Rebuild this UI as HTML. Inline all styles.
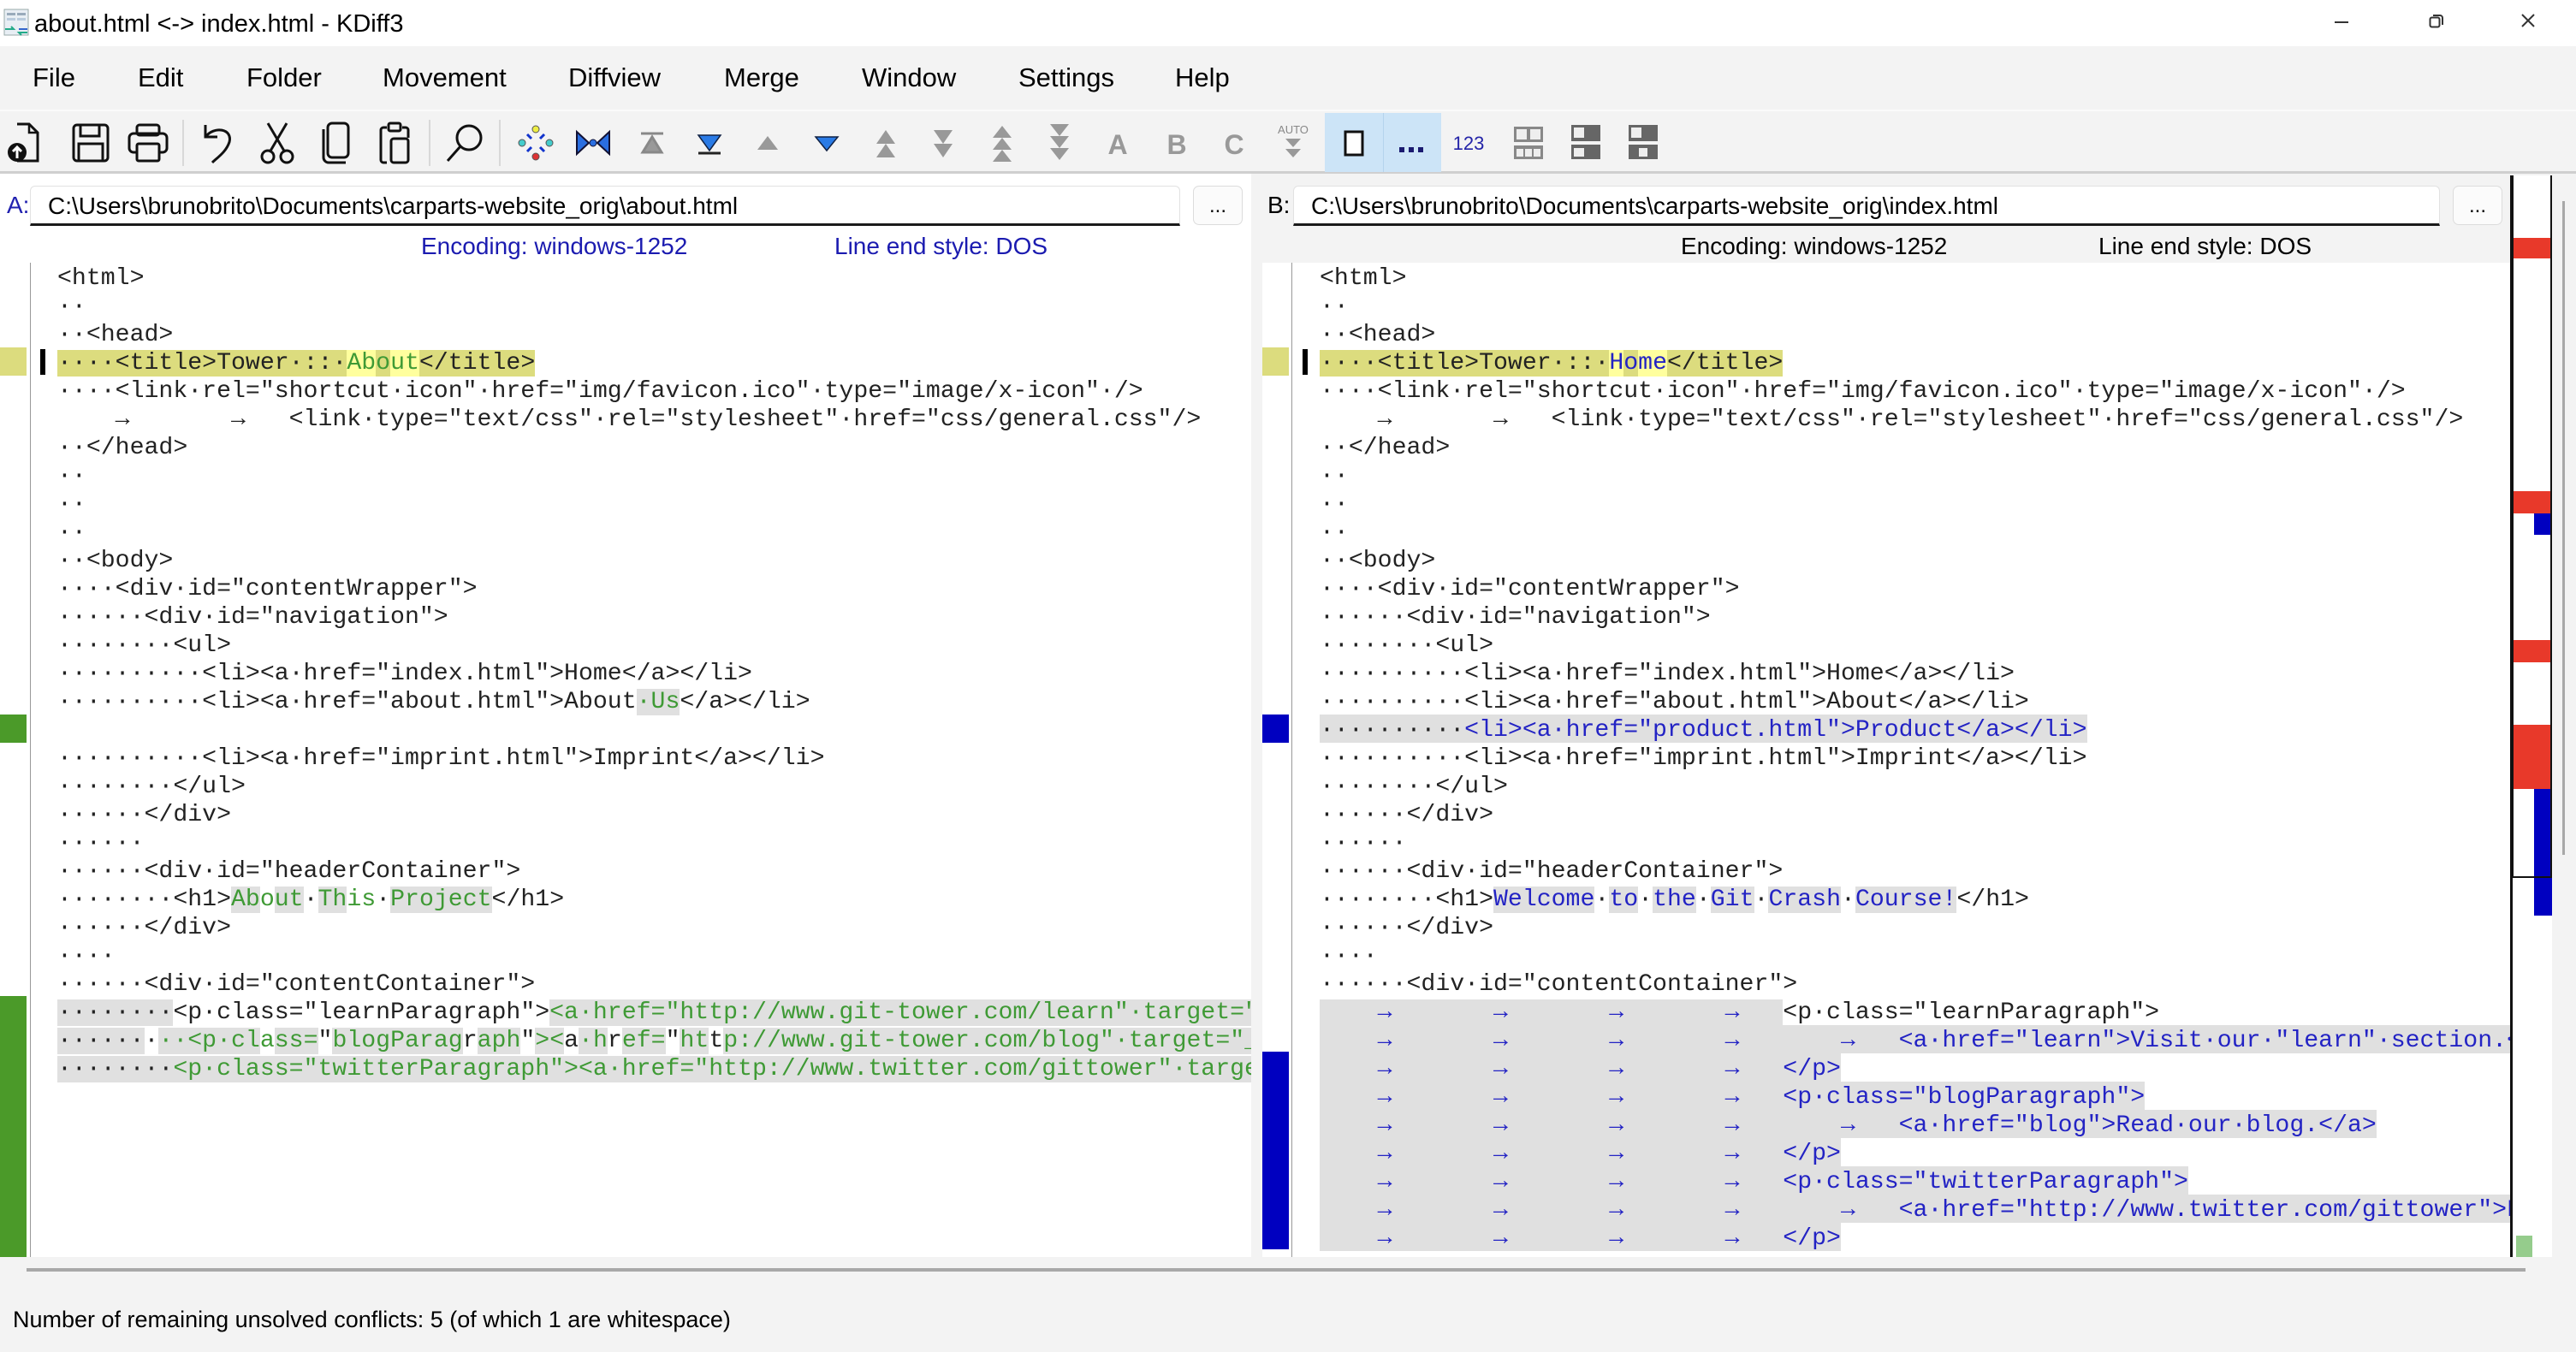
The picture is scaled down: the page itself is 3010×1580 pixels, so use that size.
<!DOCTYPE html>
<html><head><meta charset="utf-8">
<style>
*{margin:0;padding:0;box-sizing:border-box}
body{width:3010px;height:1580px;background:#f3f3f3;position:relative;overflow:hidden;font-family:"Liberation Sans",sans-serif;color:#000}
.abs{position:absolute}
#title{left:0;top:0;width:3010px;height:54px;background:#fff}
#title .t{left:40px;top:12px;font-size:29px;white-space:nowrap}
.menu{top:73px;font-size:31px;white-space:nowrap}
.ic{position:absolute;top:142px;width:50px;height:50px}
.sep{position:absolute;top:140px;width:2px;height:54px;background:#d8d8d8}
.path{position:absolute;top:217px;height:47px;background:#fff;border:1px solid #e2e2e2;border-bottom:3px solid #1a1a1a;border-radius:6px 6px 0 0;font-size:28px;line-height:46px;padding-left:20px;white-space:nowrap;overflow:hidden}
.btn{position:absolute;top:217px;width:58px;height:46px;background:#fbfbfb;border:1px solid #dcdcdc;border-radius:7px;font-size:24px;text-align:center;line-height:46px}
.enc{position:absolute;top:272px;font-size:28px;white-space:nowrap}
.pane{position:absolute;top:307px;height:1162px;background:#fff;overflow:hidden}
.ln{position:absolute;left:67px;height:33px;line-height:33px;padding-top:2px;font-family:"Liberation Mono","DejaVu Sans Mono",monospace;font-size:28.2px;white-space:pre;color:#222}
.g{background:#e0e0e0}
.y{background:#dcdc7e}
.yl{background:#ffff9e}
.gt{color:#3f9a35}
.bt{color:#2323c4}
.w{background:#fff}
.mk{position:absolute;left:0;width:31px}
</style></head><body>
<div id="title" class="abs">
<svg class="abs" style="left:4px;top:10px" width="32" height="34"><rect x="1" y="1" width="28" height="30" fill="#e8eef4" stroke="#9aa"/><rect x="4" y="5" width="10" height="3" fill="#9ab"/><rect x="16" y="5" width="10" height="3" fill="#9ab"/><rect x="4" y="11" width="10" height="3" fill="#bcd"/><rect x="16" y="11" width="10" height="3" fill="#bcd"/><path d="M2 24h10l-3-3M28 28H18l3 3" stroke="#2a8" stroke-width="2" fill="none"/><path d="M18 24h10" stroke="#36c" stroke-width="2"/></svg>
<div class="abs t">about.html &lt;-&gt; index.html - KDiff3</div>
<div class="abs" style="left:2728px;top:25px;width:16px;height:2px;background:#333"></div>
<svg class="abs" style="left:2838px;top:16px" width="18" height="18"><rect x="1.5" y="4.5" width="11" height="11" rx="2" fill="none" stroke="#333" stroke-width="2"/><path d="M5 2h8a3 3 0 0 1 3 3v8" fill="none" stroke="#333" stroke-width="2"/></svg>
<svg class="abs" style="left:2945px;top:15px" width="18" height="18"><path d="M2 2l14 14M16 2L2 16" stroke="#333" stroke-width="2"/></svg>
</div>
<div class="abs menu" style="left:38px">File</div>
<div class="abs menu" style="left:161px">Edit</div>
<div class="abs menu" style="left:288px">Folder</div>
<div class="abs menu" style="left:447px">Movement</div>
<div class="abs menu" style="left:664px">Diffview</div>
<div class="abs menu" style="left:846px">Merge</div>
<div class="abs menu" style="left:1007px">Window</div>
<div class="abs menu" style="left:1190px">Settings</div>
<div class="abs menu" style="left:1373px">Help</div>
<div class="abs" style="left:0;top:128px;width:3010px;height:2px;background:#fafafa"></div>
<div class="abs" style="left:0;top:200px;width:3010px;height:3px;background:#cfcfcf"></div>

<!-- toolbar -->
<svg class="ic" style="left:6px" viewBox="0 0 50 50"><path d="M14 3h14l10 10v33H14" fill="none" stroke="#111" stroke-width="3"/><path d="M28 3v10h10" fill="none" stroke="#111" stroke-width="2.5"/><circle cx="14" cy="36" r="11" fill="#111"/><path d="M14 43V30M9 35l5-5 5 5" stroke="#fff" stroke-width="3" fill="none"/></svg>
<svg class="ic" style="left:81px" viewBox="0 0 50 50"><rect x="5" y="4" width="40" height="42" rx="4" fill="none" stroke="#111" stroke-width="3"/><rect x="13" y="4" width="22" height="13" fill="none" stroke="#111" stroke-width="3"/><rect x="11" y="26" width="28" height="20" fill="none" stroke="#111" stroke-width="3"/></svg>
<svg class="ic" style="left:148px" viewBox="0 0 50 50"><rect x="12" y="4" width="26" height="12" rx="3" fill="none" stroke="#111" stroke-width="3"/><rect x="3" y="14" width="44" height="22" rx="5" fill="none" stroke="#111" stroke-width="3"/><rect x="12" y="26" width="26" height="20" rx="2" fill="#f3f3f3" stroke="#111" stroke-width="3"/></svg>
<div class="sep" style="left:213px"></div>
<svg class="ic" style="left:230px" viewBox="0 0 50 50"><path d="M10 4v14h14" fill="none" stroke="#111" stroke-width="3"/><path d="M10 18C20 5 42 8 38 24 34 36 24 42 18 48" fill="none" stroke="#111" stroke-width="3"/></svg>
<svg class="ic" style="left:299px" viewBox="0 0 50 50"><path d="M14 2l20 34M36 2L16 36" stroke="#111" stroke-width="3"/><circle cx="14" cy="41" r="7" fill="none" stroke="#111" stroke-width="3"/><circle cx="36" cy="41" r="7" fill="none" stroke="#111" stroke-width="3"/></svg>
<svg class="ic" style="left:369px" viewBox="0 0 50 50"><rect x="14" y="2" width="24" height="40" rx="5" fill="none" stroke="#111" stroke-width="3"/><path d="M9 9v33a6 6 0 0 0 6 6h20" fill="none" stroke="#111" stroke-width="3"/></svg>
<svg class="ic" style="left:436px" viewBox="0 0 50 50"><path d="M16 7h-4a3 3 0 0 0-3 3v35a3 3 0 0 0 3 3h4M34 7h4a3 3 0 0 1 3 3v9" fill="none" stroke="#111" stroke-width="3"/><rect x="18" y="2" width="14" height="9" rx="2" fill="none" stroke="#111" stroke-width="3"/><rect x="21" y="20" width="20" height="28" rx="3" fill="none" stroke="#111" stroke-width="3"/></svg>
<div class="sep" style="left:501px"></div>
<svg class="ic" style="left:518px" viewBox="0 0 50 50"><circle cx="30" cy="19" r="14" fill="none" stroke="#111" stroke-width="3"/><path d="M20 29L5 46" stroke="#111" stroke-width="3"/></svg>
<div class="sep" style="left:583px"></div>
<svg class="ic" style="left:601px" viewBox="0 0 50 50"><circle cx="25" cy="9" r="4" fill="#ee4" stroke="#555"/><circle cx="25" cy="41" r="4" fill="#d33" stroke="#555"/><circle cx="9" cy="25" r="4" fill="#4cc" stroke="#555"/><circle cx="41" cy="25" r="4" fill="#4cc" stroke="#555"/><path d="M15 15l5 5M35 15l-5 5M15 35l5-5M35 35l-5-5" stroke="#13c" stroke-width="3"/></svg>
<svg class="ic" style="left:668px" viewBox="0 0 50 50"><path d="M6 12v26l14-13zM44 12v26L30 25z" fill="#2a6ee0" stroke="#113" stroke-width="2"/><circle cx="25" cy="25" r="4" fill="#2a6ee0" stroke="#113"/></svg>
<svg class="ic" style="left:737px" viewBox="0 0 50 50"><path d="M12 14h26M14 36h22L25 18z" fill="#999" stroke="#888" stroke-width="3"/></svg>
<svg class="ic" style="left:804px" viewBox="0 0 50 50"><path d="M12 16h26L25 34z" fill="#2a7be6" stroke="#124" stroke-width="1.5"/><path d="M12 37h26" stroke="#222" stroke-width="3"/></svg>
<svg class="ic" style="left:872px" viewBox="0 0 50 50"><path d="M13 33h24L25 17z" fill="#999"/></svg>
<svg class="ic" style="left:941px" viewBox="0 0 50 50"><path d="M12 18h26L25 34z" fill="#2a7be6" stroke="#124" stroke-width="1.5"/></svg>
<svg class="ic" style="left:1010px" viewBox="0 0 50 50"><path d="M14 26h22L25 10zM14 42h22L25 26z" fill="#999"/></svg>
<svg class="ic" style="left:1077px" viewBox="0 0 50 50"><path d="M14 10h22L25 26zM14 26h22L25 42z" fill="#999"/></svg>
<svg class="ic" style="left:1146px" viewBox="0 0 50 50"><path d="M14 19h22L25 5zM14 33h22L25 19zM14 47h22L25 33z" fill="#999"/></svg>
<svg class="ic" style="left:1213px" viewBox="0 0 50 50"><path d="M14 3h22L25 17zM14 17h22L25 31zM14 31h22L25 45z" fill="#999"/></svg>
<svg class="ic" style="left:1281px" viewBox="0 0 50 50"><text x="25" y="38" text-anchor="middle" font-family="Liberation Sans" font-weight="bold" font-size="32" fill="#999">A</text></svg>
<svg class="ic" style="left:1350px" viewBox="0 0 50 50"><text x="25" y="38" text-anchor="middle" font-family="Liberation Sans" font-weight="bold" font-size="32" fill="#999">B</text></svg>
<svg class="ic" style="left:1417px" viewBox="0 0 50 50"><text x="25" y="38" text-anchor="middle" font-family="Liberation Sans" font-weight="bold" font-size="32" fill="#999">C</text></svg>
<svg class="ic" style="left:1486px" viewBox="0 0 50 50"><text x="25" y="14" text-anchor="middle" font-family="Liberation Sans" font-size="13" fill="#888">AUTO</text><path d="M16 20h18l-9 10zM16 32h18l-9 10z" fill="#999"/></svg>
<div class="abs" style="left:1548px;top:132px;width:136px;height:69px;background:#cce4f7"></div>
<div class="abs" style="left:1616px;top:132px;width:1px;height:69px;background:#b5d3ec"></div>
<svg class="ic" style="left:1557px" viewBox="0 0 50 50"><rect x="15" y="12" width="20" height="27" fill="#fff" stroke="#111" stroke-width="3"/></svg>
<svg class="ic" style="left:1624px" viewBox="0 0 50 50"><path d="M11 33h6M22 33h6M33 33h6" stroke="#1a1a70" stroke-width="6"/></svg>
<svg class="ic" style="left:1691px" viewBox="0 0 50 50"><text x="25" y="33" text-anchor="middle" font-family="Liberation Sans" font-size="22" fill="#2323a8">123</text></svg>
<svg class="ic" style="left:1761px" viewBox="0 0 50 50"><rect x="8" y="6" width="34" height="38" fill="#888"/><rect x="11" y="9" width="12" height="12" fill="#eee"/><rect x="27" y="9" width="12" height="12" fill="#eee"/><rect x="11" y="32" width="8" height="9" fill="#eee"/><rect x="21" y="32" width="8" height="9" fill="#eee"/><rect x="31" y="32" width="8" height="9" fill="#eee"/><rect x="8" y="24" width="34" height="4" fill="#f3f3f3"/></svg>
<svg class="ic" style="left:1828px" viewBox="0 0 50 50"><rect x="8" y="4" width="34" height="40" fill="#666"/><rect x="11" y="7" width="12" height="12" fill="#eee"/><rect x="8" y="23" width="34" height="4" fill="#f3f3f3"/><rect x="11" y="31" width="12" height="10" fill="#eee"/></svg>
<svg class="ic" style="left:1895px" viewBox="0 0 50 50"><rect x="8" y="4" width="34" height="40" fill="#666"/><rect x="11" y="7" width="12" height="12" fill="#eee"/><rect x="8" y="23" width="34" height="4" fill="#f3f3f3"/><rect x="20" y="31" width="10" height="10" fill="#eee"/></svg>

<!-- headers -->
<div class="abs" style="left:0;top:203px;width:1462px;height:104px;background:#fff"></div>
<div class="abs" style="left:8px;top:224px;font-size:28px;color:#2222b0">A:</div>
<div class="path" style="left:35px;width:1344px">C:\Users\brunobrito\Documents\carparts-website_orig\about.html</div>
<div class="btn" style="left:1394px">...</div>
<div class="abs" style="left:1481px;top:224px;font-size:28px">B:</div>
<div class="path" style="left:1511px;width:1340px">C:\Users\brunobrito\Documents\carparts-website_orig\index.html</div>
<div class="btn" style="left:2866px">...</div>
<div class="enc" style="left:492px;color:#1b1bb0">Encoding: windows-1252</div>
<div class="enc" style="left:975px;color:#1b1bb0">Line end style: DOS</div>
<div class="enc" style="left:1964px">Encoding: windows-1252</div>
<div class="enc" style="left:2452px">Line end style: DOS</div>

<!-- left pane -->
<div class="pane" style="left:0;width:1462px">
<div class="abs" style="left:35px;top:0;width:1px;height:1162px;background:#999"></div>
<div class="mk" style="top:99px;height:33px;background:#dcdc7e"></div>
<div class="abs" style="left:47px;top:101px;width:6px;height:30px;background:#000"></div>
<div class="mk" style="top:528px;height:33px;background:#4b9a29"></div>
<div class="mk" style="top:857px;height:305px;background:#4b9a29"></div>
<div class="ln" style="top:0">&lt;html&gt;</div>
<div class="ln" style="top:33px">··</div>
<div class="ln" style="top:66px">··&lt;head&gt;</div>
<div class="ln" style="top:99px"><span class="y">····&lt;title&gt;Tower·::·</span><span class="yl gt">Ab</span><span class="y gt">o</span><span class="yl gt">ut</span><span class="y">&lt;/title&gt;</span></div>
<div class="ln" style="top:132px">····&lt;link·rel="shortcut·icon"·href="img/favicon.ico"·type="image/x-icon"·/&gt;</div>
<div class="ln" style="top:165px">    →       →   &lt;link·type="text/css"·rel="stylesheet"·href="css/general.css"/&gt;</div>
<div class="ln" style="top:198px">··&lt;/head&gt;</div>
<div class="ln" style="top:231px">··</div>
<div class="ln" style="top:264px">··</div>
<div class="ln" style="top:297px">··</div>
<div class="ln" style="top:330px">··&lt;body&gt;</div>
<div class="ln" style="top:363px">····&lt;div·id="contentWrapper"&gt;</div>
<div class="ln" style="top:396px">······&lt;div·id="navigation"&gt;</div>
<div class="ln" style="top:429px">········&lt;ul&gt;</div>
<div class="ln" style="top:462px">··········&lt;li&gt;&lt;a·href="index.html"&gt;Home&lt;/a&gt;&lt;/li&gt;</div>
<div class="ln" style="top:495px">··········&lt;li&gt;&lt;a·href="about.html"&gt;About<span class="g gt">·Us</span>&lt;/a&gt;&lt;/li&gt;</div>
<div class="ln" style="top:561px">··········&lt;li&gt;&lt;a·href="imprint.html"&gt;Imprint&lt;/a&gt;&lt;/li&gt;</div>
<div class="ln" style="top:594px">········&lt;/ul&gt;</div>
<div class="ln" style="top:627px">······&lt;/div&gt;</div>
<div class="ln" style="top:660px">······</div>
<div class="ln" style="top:693px">······&lt;div·id="headerContainer"&gt;</div>
<div class="ln" style="top:726px">········&lt;h1&gt;<span class="g gt">Ab</span><span class="gt">o</span><span class="g gt">ut</span>·<span class="g gt">Th</span><span class="gt">is</span>·<span class="g gt">Project</span>&lt;/h1&gt;</div>
<div class="ln" style="top:759px">······&lt;/div&gt;</div>
<div class="ln" style="top:792px">····</div>
<div class="ln" style="top:825px">······&lt;div·id="contentContainer"&gt;</div>
<div class="ln" style="top:858px"><span class="g">········</span>&lt;p·class="learnParagraph"&gt;<span class="g gt">&lt;a·href="http://www.git-tower.com/learn"·target="_blank"&gt;Visit·our·learn·section&lt;/a&gt;&lt;/p&gt;</span></div>
<div class="ln" style="top:891px"><span class="g">······</span>·<span class="g gt">··&lt;p·cl</span><span class="gt">a</span><span class="g gt">ss=</span>"<span class="g gt">blogParag</span>r<span class="g gt">aph</span>"<span class="g gt">&gt;&lt;</span>a<span class="g gt">·h</span>r<span class="g gt">ef=</span>"<span class="g gt">ht</span>t<span class="g gt">p://www.git-tower.com/blog"·target="_blank"&gt;Read·our·blog&lt;/a&gt;&lt;/p&gt;</span></div>
<div class="ln" style="top:924px"><span class="g">········</span><span class="g gt">&lt;p·class="twitterParagraph"&gt;&lt;a·href="http://www.twitter.com/gittower"·target="_blank"&gt;Follow&lt;/a&gt;</span></div>
</div>

<!-- right pane -->
<div class="pane" style="left:1475px;width:1460px">
<div class="abs" style="left:34px;top:0;width:1px;height:1162px;background:#999"></div>
<div class="mk" style="top:99px;height:33px;background:#dcdc7e"></div>
<div class="abs" style="left:47px;top:101px;width:6px;height:30px;background:#000"></div>
<div class="mk" style="top:528px;height:33px;background:#0000c0"></div>
<div class="mk" style="top:922px;height:231px;background:#0000c0"></div>
<div class="ln" style="top:0">&lt;html&gt;</div>
<div class="ln" style="top:33px">··</div>
<div class="ln" style="top:66px">··&lt;head&gt;</div>
<div class="ln" style="top:99px"><span class="y">····&lt;title&gt;Tower·::·</span><span class="yl bt">H</span><span class="y bt">o</span><span class="yl bt">me</span><span class="y">&lt;/title&gt;</span></div>
<div class="ln" style="top:132px">····&lt;link·rel="shortcut·icon"·href="img/favicon.ico"·type="image/x-icon"·/&gt;</div>
<div class="ln" style="top:165px">    →       →   &lt;link·type="text/css"·rel="stylesheet"·href="css/general.css"/&gt;</div>
<div class="ln" style="top:198px">··&lt;/head&gt;</div>
<div class="ln" style="top:231px">··</div>
<div class="ln" style="top:264px">··</div>
<div class="ln" style="top:297px">··</div>
<div class="ln" style="top:330px">··&lt;body&gt;</div>
<div class="ln" style="top:363px">····&lt;div·id="contentWrapper"&gt;</div>
<div class="ln" style="top:396px">······&lt;div·id="navigation"&gt;</div>
<div class="ln" style="top:429px">········&lt;ul&gt;</div>
<div class="ln" style="top:462px">··········&lt;li&gt;&lt;a·href="index.html"&gt;Home&lt;/a&gt;&lt;/li&gt;</div>
<div class="ln" style="top:495px">··········&lt;li&gt;&lt;a·href="about.html"&gt;About&lt;/a&gt;&lt;/li&gt;</div>
<div class="ln g" style="top:528px">··········<span class="bt">&lt;li&gt;&lt;a·href="product.html"&gt;Product&lt;/a&gt;&lt;/li&gt;</span></div>
<div class="ln" style="top:561px">··········&lt;li&gt;&lt;a·href="imprint.html"&gt;Imprint&lt;/a&gt;&lt;/li&gt;</div>
<div class="ln" style="top:594px">········&lt;/ul&gt;</div>
<div class="ln" style="top:627px">······&lt;/div&gt;</div>
<div class="ln" style="top:660px">······</div>
<div class="ln" style="top:693px">······&lt;div·id="headerContainer"&gt;</div>
<div class="ln" style="top:726px">········&lt;h1&gt;<span class="g bt">Welcome</span>·<span class="g bt">to</span>·<span class="g bt">the</span>·<span class="g bt">Git</span>·<span class="g bt">Crash</span>·<span class="g bt">Course!</span>&lt;/h1&gt;</div>
<div class="ln" style="top:759px">······&lt;/div&gt;</div>
<div class="ln" style="top:792px">····</div>
<div class="ln" style="top:825px">······&lt;div·id="contentContainer"&gt;</div>
<div class="ln" style="top:858px"><span class="g bt">    →       →       →       →   </span>&lt;p·class="learnParagraph"&gt;</div>
<div class="ln g bt" style="top:891px">    →       →       →       →       →   &lt;a·href="learn"&gt;Visit·our·"learn"·section.&lt;/a&gt;</div>
<div class="ln g bt" style="top:924px">    →       →       →       →   &lt;/p&gt;</div>
<div class="ln g bt" style="top:957px">    →       →       →       →   &lt;p·class="blogParagraph"&gt;</div>
<div class="ln g bt" style="top:990px">    →       →       →       →       →   &lt;a·href="blog"&gt;Read·our·blog.&lt;/a&gt;</div>
<div class="ln g bt" style="top:1023px">    →       →       →       →   &lt;/p&gt;</div>
<div class="ln g bt" style="top:1056px">    →       →       →       →   &lt;p·class="twitterParagraph"&gt;</div>
<div class="ln g bt" style="top:1089px">    →       →       →       →       →   &lt;a·href="http://www.twitter.com/gittower"&gt;Follow·us&lt;/a&gt;</div>
<div class="ln g bt" style="top:1122px">    →       →       →       →   &lt;/p&gt;</div>
</div>

<!-- overview -->
<div class="abs" style="left:2933px;top:205px;width:3px;height:1264px;background:#111"></div>
<div class="abs" style="left:2936px;top:205px;width:46px;height:1264px;background:#fff"></div>
<div class="abs" style="left:2937px;top:278px;width:45px;height:24px;background:#e8392a"></div>
<div class="abs" style="left:2937px;top:574px;width:45px;height:26px;background:#e8392a"></div>
<div class="abs" style="left:2961px;top:600px;width:21px;height:25px;background:#0000c0"></div>
<div class="abs" style="left:2937px;top:748px;width:45px;height:26px;background:#e8392a"></div>
<div class="abs" style="left:2937px;top:847px;width:45px;height:75px;background:#e8392a"></div>
<div class="abs" style="left:2961px;top:922px;width:21px;height:148px;background:#0000c0"></div>
<div class="abs" style="left:2935px;top:205px;width:47px;height:821px;border:2px solid #111;border-top:none"></div>
<div class="abs" style="left:2940px;top:1444px;width:19px;height:25px;background:#95cc8c"></div>
<div class="abs" style="left:2994px;top:235px;width:3px;height:764px;background:#a8a8a8"></div>

<div class="abs" style="left:31px;top:1482px;width:2920px;height:4px;background:#a8a8a8"></div>
<div class="abs" style="left:15px;top:1527px;font-size:27px;white-space:nowrap">Number of remaining unsolved conflicts: 5 (of which 1 are whitespace)</div>
</body></html>
